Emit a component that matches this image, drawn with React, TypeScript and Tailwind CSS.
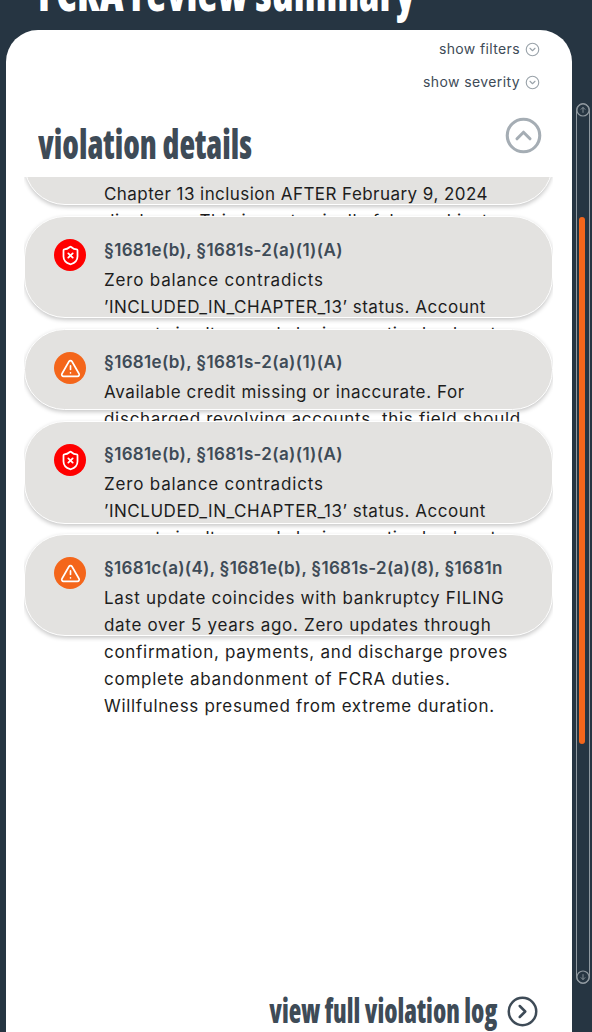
import {
  CircleChevronDown,
  CircleChevronRight,
  CircleChevronUp,
  ShieldX,
  TriangleAlert,
} from "lucide-react";

type Severity = "critical" | "warning";

interface Line {
  text: string;
  tracking: string;
}

interface Violation {
  severity: Severity;
  statutes: Line;
  lines: Line[];
  size: string;
  textTop: string;
}

const zeroBalance: Line[] = [
  { text: "Zero balance contradicts", tracking: "tracking-[0.82px]" },
  { text: "’INCLUDED_IN_CHAPTER_13’ status. Account", tracking: "tracking-[0.52px]" },
  { text: "cannot simultaneously be in an active bankrupt", tracking: "tracking-[0.3px]" },
];

const violations: Violation[] = [
  {
    severity: "critical",
    statutes: { text: "§1681e(b), §1681s-2(a)(1)(A)", tracking: "tracking-[0.33px]" },
    lines: zeroBalance,
    size: "mt-[11px] h-[102px]",
    textTop: "pt-5",
  },
  {
    severity: "warning",
    statutes: { text: "§1681e(b), §1681s-2(a)(1)(A)", tracking: "tracking-[0.33px]" },
    lines: [
      { text: "Available credit missing or inaccurate. For", tracking: "tracking-[0.6px]" },
      { text: "discharged revolving accounts, this field should", tracking: "tracking-[0.71px]" },
    ],
    size: "mt-[11px] h-[81px]",
    textTop: "pt-[19px]",
  },
  {
    severity: "critical",
    statutes: { text: "§1681e(b), §1681s-2(a)(1)(A)", tracking: "tracking-[0.33px]" },
    lines: zeroBalance,
    size: "mt-[11px] h-[103px]",
    textTop: "pt-[19px]",
  },
  {
    severity: "warning",
    statutes: {
      text: "§1681c(a)(4), §1681e(b), §1681s-2(a)(8), §1681n",
      tracking: "tracking-[0.28px]",
    },
    lines: [
      { text: "Last update coincides with bankruptcy FILING", tracking: "tracking-[0.71px]" },
      { text: "date over 5 years ago. Zero updates through", tracking: "tracking-[0.69px]" },
      { text: "confirmation, payments, and discharge proves", tracking: "tracking-[0.71px]" },
      { text: "complete abandonment of FCRA duties.", tracking: "tracking-[0.74px]" },
      { text: "Willfulness presumed from extreme duration.", tracking: "tracking-[0.68px]" },
    ],
    size: "mt-[10px] h-[102px]",
    textTop: "pt-5",
  },
];

function SeverityBadge({ severity }: { severity: Severity }) {
  return severity === "critical" ? (
    <span className="mt-[22px] flex size-8 shrink-0 items-center justify-center rounded-full bg-[#ff0000] text-white">
      <ShieldX size={21} strokeWidth={2} />
    </span>
  ) : (
    <span className="mt-[22px] flex size-8 shrink-0 items-center justify-center rounded-full bg-[#f4661b] text-white">
      <TriangleAlert size={21} strokeWidth={1.9} />
    </span>
  );
}

function ViolationCard({ violation }: { violation: Violation }) {
  return (
    <article
      className={`relative flex shrink-0 gap-[18px] rounded-[41px] border border-white bg-[#e3e2e0] pl-[29px] shadow-[0_2px_4px_rgba(0,0,0,0.22)] ${violation.size}`}
    >
      <SeverityBadge severity={violation.severity} />
      <div className={`whitespace-nowrap ${violation.textTop}`}>
        <h3 className={`mb-[3px] font-semibold text-[#3e4b57] ${violation.statutes.tracking}`}>
          {violation.statutes.text}
        </h3>
        {violation.lines.map((line) => (
          <p key={line.text} className={line.tracking}>
            {line.text}
          </p>
        ))}
      </div>
    </article>
  );
}

function ScrollArrow({ down = false }: { down?: boolean }) {
  return (
    <svg
      viewBox="0 0 14 14"
      className={`-mx-px size-3.5 shrink-0 ${down ? "-mb-px rotate-180" : "-mt-px"}`}
      fill="none"
      stroke="#8f989f"
    >
      <circle cx="7" cy="7" r="6" strokeWidth="1.1" />
      <path d="M7 9.8V4.4M4.8 6.6 7 4.4l2.2 2.2" strokeWidth="0.9" />
    </svg>
  );
}

export default function App() {
  return (
    <div className="flex h-[1032px] w-[592px] overflow-hidden bg-[#263542] font-['Inter',sans-serif]">
      <div className="flex w-[572px] shrink-0 flex-col pl-1.5">
        <header className="flex h-[30px] shrink-0 items-end pb-[9px] pl-8">
          <h1 className="origin-left scale-x-[0.797] font-['Open_Sans',sans-serif] text-[52px] leading-[60px] font-extrabold whitespace-nowrap text-white [font-stretch:75%]">
            FCRA review summary
          </h1>
        </header>
        <main className="flex flex-1 flex-col rounded-t-[32px] bg-white">
          <div className="flex flex-col items-end gap-[13px] pt-[9px] pr-8 text-sm leading-5 text-[#3e4b57]">
            <button className="flex items-center gap-[5px] tracking-[0.37px]">
              show filters
              <CircleChevronDown size={15} strokeWidth={1.8} className="text-[#9aa3aa]" />
            </button>
            <button className="flex items-center gap-[5px] tracking-[0.4px]">
              show severity
              <CircleChevronDown size={15} strokeWidth={1.8} className="text-[#9aa3aa]" />
            </button>
          </div>
          <div className="flex h-[85px] shrink-0 items-start justify-between pt-[23px] pr-[29px] pl-8">
            <h2 className="origin-left scale-x-[0.785] font-['Open_Sans',sans-serif] text-[41px] leading-[56px] font-extrabold whitespace-nowrap text-[#3e4b57] [font-stretch:75%]">
              violation details
            </h2>
            <CircleChevronUp size={39} strokeWidth={1.9} className="mt-px text-[#a5adb4]" />
          </div>
          <section className="mx-[18px] h-[801px] w-[529px] shrink-0 overflow-hidden text-[17px] leading-[27px] text-[#1d1d1d]">
            <div className="-mt-[74px] flex flex-col">
              <article className="relative h-[102px] shrink-0 rounded-[41px] border border-white bg-[#e3e2e0] pt-[77px] pl-[79px] whitespace-nowrap shadow-[0_2px_4px_rgba(0,0,0,0.22)]">
                <p className="tracking-[0.45px]">Chapter 13 inclusion AFTER February 9, 2024</p>
                <p className="tracking-[0.6px]">discharge. This is systemically false and just</p>
              </article>
              {violations.map((violation, index) => (
                <ViolationCard key={index} violation={violation} />
              ))}
            </div>
          </section>
          <footer className="flex items-center justify-end gap-[9px] pt-[11px] pr-[33px]">
            <h2 className="origin-right scale-x-[0.78] font-['Open_Sans',sans-serif] text-[33px] leading-[44px] font-extrabold whitespace-nowrap text-[#3e4b57] [font-stretch:75%]">
              view full violation log
            </h2>
            <CircleChevronRight size={33} strokeWidth={1.8} className="text-[#3e4b57]" />
          </footer>
        </main>
      </div>
      <div className="mt-[103px] ml-1 flex h-[881px] w-3.5 flex-col items-center justify-between rounded-full border border-[#8f989f]">
        <ScrollArrow />
        <div className="mt-[100px] mr-0.5 mb-auto h-[527px] w-1.5 rounded-full bg-[#f4661b]" />
        <ScrollArrow down />
      </div>
    </div>
  );
}
